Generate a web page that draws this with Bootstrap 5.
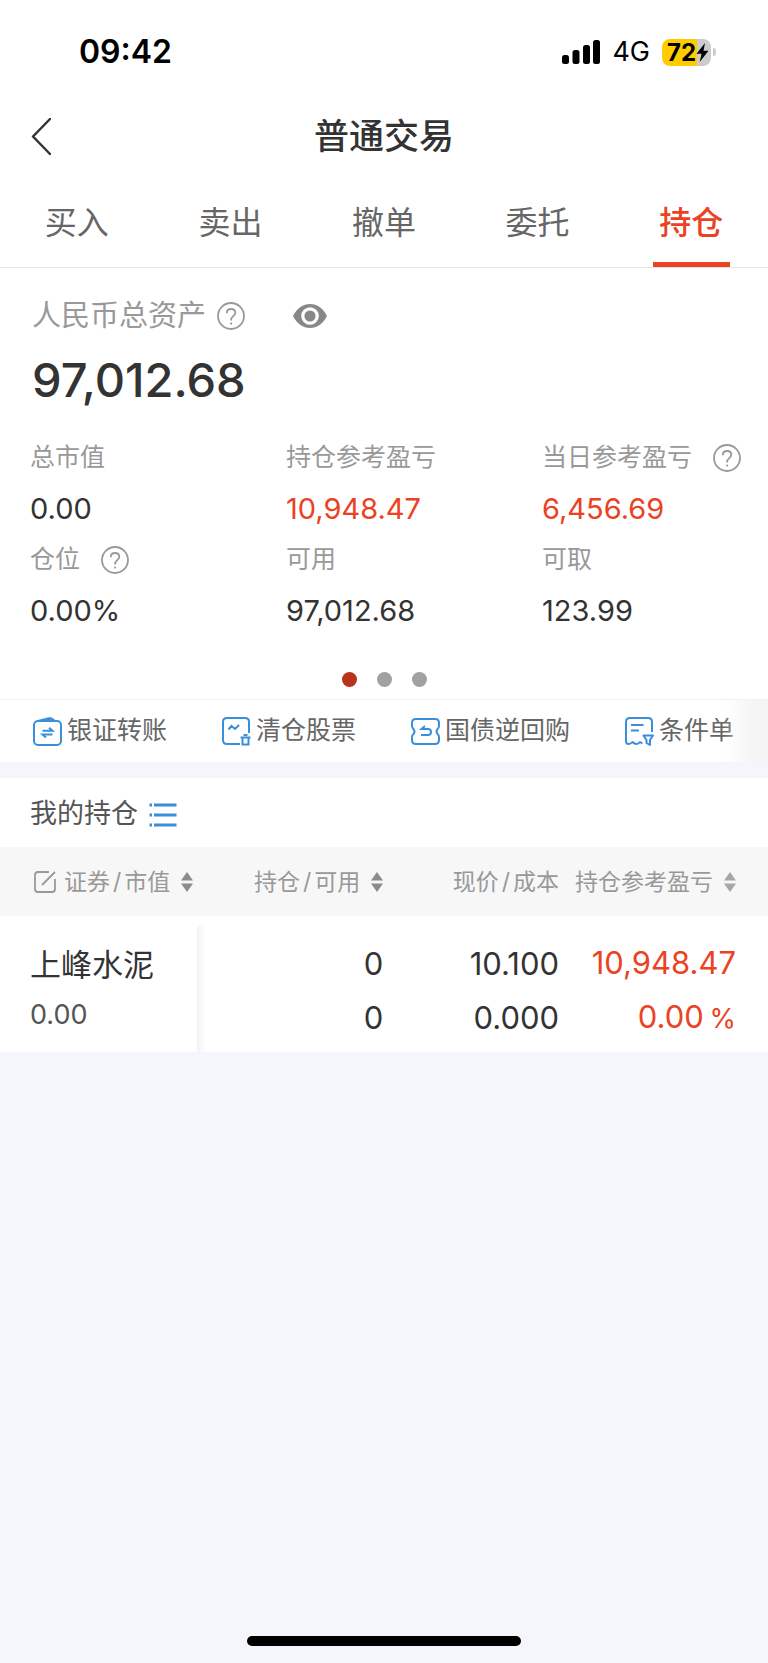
<!DOCTYPE html>
<html lang="zh-CN">
<head>
<meta charset="utf-8">
<meta name="viewport" content="width=device-width, initial-scale=1">
<title>普通交易</title>
<link href="https://cdn.jsdelivr.net/npm/bootstrap@5.3.0/dist/css/bootstrap.min.css" rel="stylesheet">
<style>
  :root { --ink: #333; --soft: #666; --mute: #999; --up: #eb4224; --sky: #3a8fdc; --ground: #f4f6fb; }
  body { font-family: Inter, "Noto Sans CJK SC", sans-serif; color: var(--ink); background: var(--ground); }
  svg { display: block; flex: none; }
  a, a:hover { color: inherit; text-decoration: none; }
  .status { height: 102px; padding: 2px 52px 0 79px; color: #000; }
  .clock { font-size: 32px; font-weight: 600; }
  .carrier { font-size: 27px; }
  .battery { width: 49px; height: 27px; border-radius: 8px; background: linear-gradient(90deg, #fc0 72%, #ccc 72%); font-size: 24px; font-weight: 700; line-height: 27px; padding-left: 5px; }
  .nub { width: 3px; height: 8px; border-radius: 0 4px 4px 0; background: #ccc; margin-left: 2px; }
  .topbar { height: 68px; display: grid; grid-template-columns: 1fr auto 1fr; padding: 0 31px; }
  .topbar h1 { font-size: 35px; font-weight: 500; line-height: 68px; margin: 0; }
  .tabs { height: 98px; border-bottom: 1px solid #e6e6e6; font-size: 32px; color: var(--soft); }
  .tabs a { flex: 1; display: flex; flex-direction: column; justify-content: flex-end; align-items: center; line-height: 78px; }
  .tabs .on { color: var(--up); font-weight: 500; }
  .tabs a::after { content: ""; width: 50%; height: 5px; }
  .tabs .on::after { background: var(--up); }
  .bare { border: 0; padding: 0; background: none; color: var(--mute); }
  .overview { padding: 24px 0 12px; }
  .total-label { font-size: 29px; line-height: 48px; color: var(--mute); padding: 0 32px; }
  .total-label .bare { margin-left: 11px; }
  .total { font-size: 47px; font-weight: 500; line-height: 80px; padding: 0 32px; margin-bottom: 12px; }
  .figures { display: grid; grid-template-columns: repeat(3, 1fr); margin: 0; }
  .figures > div { padding-left: 30px; white-space: nowrap; }
  .figures dt { display: flex; align-items: center; gap: 21px; font-size: 25px; font-weight: 400; line-height: 51px; color: var(--mute); }
  .figures dd { font-size: 29px; line-height: 51px; margin: 0; }
  .up { color: var(--up) !important; }
  .dots { gap: 20px; padding-top: 36px; }
  .dots button { width: 15px; height: 15px; border-radius: 50%; background: #a1a1a1; }
  .dots .on { background: #b8321c; }
  .quick { height: 63px; gap: 55px; padding: 0 33px; border-top: 1px solid #f3f3f3; font-size: 25px; color: var(--soft); overflow: hidden; white-space: nowrap; }
  .quick a { display: flex; align-items: center; gap: 5px; flex: none; }
  .quick svg { color: var(--sky); }
  .fade-edge { position: absolute; inset: 0 0 0 auto; width: 44px; background: linear-gradient(90deg, #f5f5f500, #f5f5f5 70%); pointer-events: none; }
  .mine { height: 69px; margin-top: 16px; padding: 4px 30px 0; gap: 11px; }
  .mine h2 { font-size: 27px; font-weight: 400; margin: 0; color: #555; }
  .holdings { width: 100%; table-layout: fixed; white-space: nowrap; }
  .holdings th { height: 69px; padding: 0; background: #f7f7f7; font-size: 23px; font-weight: 400; text-align: right; }
  .holdings th button { display: inline-flex; align-items: center; vertical-align: middle; }
  .holdings th i { font-style: normal; margin: 0 3px; }
  .holdings th .arrows { margin-left: 11px; }
  .holdings td { height: 136px; padding: 13px 0 0; text-align: right; font-size: 31px; line-height: 54px; vertical-align: middle; }
  .holdings tr > :first-child { text-align: left; padding-left: 30px; }
  .holdings tr > :last-child { padding-right: 32px; }
  .holdings td:first-child { padding-top: 7px; }
  .holdings .val { font-size: 27px; color: #555; line-height: 46px; }
  .holdings .pct { font-size: 27px; margin-left: -3px; }
  .holdings td.lift { background: linear-gradient(90deg, #f5f3f4, #fff) 2px 9px / 9px 100% no-repeat; }
  .home { width: 274px; height: 10px; border-radius: 5px; background: #000; margin: auto auto 17px; }
</style>
</head>
<body class="d-flex flex-column min-vh-100">
<svg width="0" height="0" class="position-absolute" aria-hidden="true">
  <symbol id="help" viewBox="0 0 28 28"><circle cx="14" cy="14" r="13" fill="none" stroke="currentColor" stroke-width="1.800"/><path d="M9.800 11.200c0-2.600 1.800-4.200 4.300-4.200s4.200 1.500 4.200 3.800c0 3.200-4.200 3.500-4.200 7v.6" fill="none" stroke="currentColor" stroke-width="1.800"/><circle cx="14.100" cy="21.600" r="1.100" fill="currentColor"/></symbol>
  <symbol id="sort" viewBox="0 0 12 20"><path d="M6 0l6 8.500H0zM6 20l6-8.500H0z" fill="#8c8c8c"/></symbol>
</svg>

<div class="bg-white">
  <div class="status d-flex align-items-center">
    <span class="clock me-auto">09:42</span>
    <svg width="38" height="24" viewBox="0 0 38 24"><rect y="15" width="7" height="9" rx="2.500"/><rect x="10.500" y="10" width="7" height="14" rx="2.500"/><rect x="21" y="5" width="7" height="19" rx="2.500"/><rect x="31" width="7" height="24" rx="2.500"/></svg>
    <span class="carrier ms-2 ps-1 me-2 pe-1">4G</span>
    <span class="battery d-flex align-items-center">72<svg width="13" height="19" viewBox="0 0 12 19"><path d="M8.500 0L0 10.800h5L3.200 19 12 7.800H7z"/></svg></span>
    <span class="nub"></span>
  </div>
  <header class="topbar align-items-center">
    <button class="bare text-start" aria-label="返回"><svg width="20" height="37" viewBox="0 0 20 37"><path d="M19 1L2 18.500L19 36" fill="none" stroke="#333" stroke-width="2.500" stroke-linecap="round" stroke-linejoin="round"/></svg></button>
    <h1>普通交易</h1>
    <span></span>
  </header>
  <nav class="tabs d-flex">
    <a href="#">买入</a><a href="#">卖出</a><a href="#">撤单</a><a href="#">委托</a><a href="#" class="on" aria-current="page">持仓</a>
  </nav>

  <section class="overview">
    <div class="total-label d-flex align-items-center">人民币总资产
      <button class="bare" aria-label="说明"><svg width="28" height="28"><use href="#help"/></svg></button>
      <button class="bare ms-5" aria-label="隐藏金额"><svg width="34" height="24" viewBox="0 0 34 24"><path d="M0 12C4 4 10 0 17 0s13 4 17 12c-4 8-10 12-17 12S4 20 0 12z" fill="#888"/><circle cx="17" cy="12" r="7.200" fill="none" stroke="#fff" stroke-width="3.200"/></svg></button>
    </div>
    <div class="total">97,012.68</div>
    <dl class="figures">
      <div><dt>总市值</dt><dd>0.00</dd></div>
      <div><dt>持仓参考盈亏</dt><dd class="up">10,948.47</dd></div>
      <div><dt>当日参考盈亏<button class="bare" aria-label="说明"><svg width="28" height="28"><use href="#help"/></svg></button></dt><dd class="up">6,456.69</dd></div>
      <div><dt>仓位<button class="bare" aria-label="说明"><svg width="28" height="28"><use href="#help"/></svg></button></dt><dd>0.00%</dd></div>
      <div><dt>可用</dt><dd>97,012.68</dd></div>
      <div><dt>可取</dt><dd>123.99</dd></div>
    </dl>
    <div class="dots d-flex justify-content-center">
      <button class="bare on" aria-label="第1页"></button><button class="bare" aria-label="第2页"></button><button class="bare" aria-label="第3页"></button>
    </div>
  </section>

  <nav class="quick d-flex align-items-center position-relative">
    <a href="#"><svg width="29" height="29" viewBox="0 0 29 29" fill="none" stroke="currentColor" stroke-width="2"><rect x="1" y="4" width="27" height="24" rx="4"/><path d="M5 4L16 1.300q2-.5 3 .5l3 2.200M12 4l6-2M9.500 13.800h10l-3.500-3M19.500 17.500h-10l3.500 3"/></svg>银证转账</a>
    <a href="#"><svg width="29" height="29" viewBox="0 0 29 29" fill="none" stroke="currentColor" stroke-width="2"><path d="M27 16V5q0-4-4-4H5Q1 1 1 5v18q0 4 4 4h13M6.500 12.500L9.500 9l3.500 3L17 8M18.500 20.500h10M21.500 18h4M20.500 21v6.500h6V21"/></svg>清仓股票</a>
    <a href="#"><svg width="29" height="29" viewBox="0 0 29 29" fill="none" stroke="currentColor" stroke-width="2"><path d="M5 2h19q4 0 4 4v3q0 2-1.500 3-2 2.500 0 5 1.500 1 1.500 3v3q0 4-4 4H5q-4 0-4-4v-3q0-2 1.500-3 2-2.500 0-5Q1 11 1 9V6q0-4 4-4zM14 9l-3.500 3H17q3 0 3 3t-3 3h-7"/></svg>国债逆回购</a>
    <a href="#"><svg width="29" height="29" viewBox="0 0 29 29" fill="none" stroke="currentColor" stroke-width="2" stroke-linejoin="round"><path d="M27 15V5q0-4-4-4H5Q1 1 1 5v19q0 3 2.500 3t4-2q2 2 4 2t3.500-2l2.500 1.500M6 8h12.500M6 13.500h8M18.500 18.500h9.500l-3 4.500v5l-3.500-2v-3z"/></svg>条件单</a>
    <span class="fade-edge"></span>
  </nav>
</div>

<main>
  <div class="mine bg-white d-flex align-items-center">
    <h2>我的持仓</h2>
    <button class="bare" aria-label="列表"><svg width="28" height="24" viewBox="0 0 28 24"><path d="M5 2h22.500M5 12h22.500M5 22h22.500M.5 2H3M.5 12H3M.5 22H3" stroke="#3a8fdc" stroke-width="2.800"/></svg></button>
  </div>
  <table class="holdings bg-white">
    <colgroup><col style="width:25.4%"><col style="width:24.5%"><col style="width:22.9%"><col></colgroup>
    <thead><tr>
      <th><button class="bare"><svg class="ms-1 me-2" width="22" height="22" viewBox="0 0 22 22" fill="none" stroke="currentColor" stroke-width="1.800"><path d="M15 1H4Q1 1 1 4v14q0 3 3 3h14q3 0 3-3V8M8 14L21 1"/></svg>证券<i>/</i>市值<svg class="arrows" width="12" height="20"><use href="#sort"/></svg></button></th>
      <th><button class="bare">持仓<i>/</i>可用<svg class="arrows" width="12" height="20"><use href="#sort"/></svg></button></th>
      <th><button class="bare">现价<i>/</i>成本</button></th>
      <th><button class="bare">持仓参考盈亏<svg class="arrows" width="12" height="20" opacity=".75"><use href="#sort"/></svg></button></th>
    </tr></thead>
    <tbody><tr>
      <td><div>上峰水泥</div><div class="val">0.00</div></td>
      <td class="lift">0<br>0</td><td>10.100<br>0.000</td><td class="up">10,948.47<br>0.00 <span class="pct">%</span></td>
    </tr></tbody>
  </table>
</main>
<div class="home"></div>
<script src="https://cdn.jsdelivr.net/npm/bootstrap@5.3.0/dist/js/bootstrap.bundle.min.js"></script>
</body>
</html>
